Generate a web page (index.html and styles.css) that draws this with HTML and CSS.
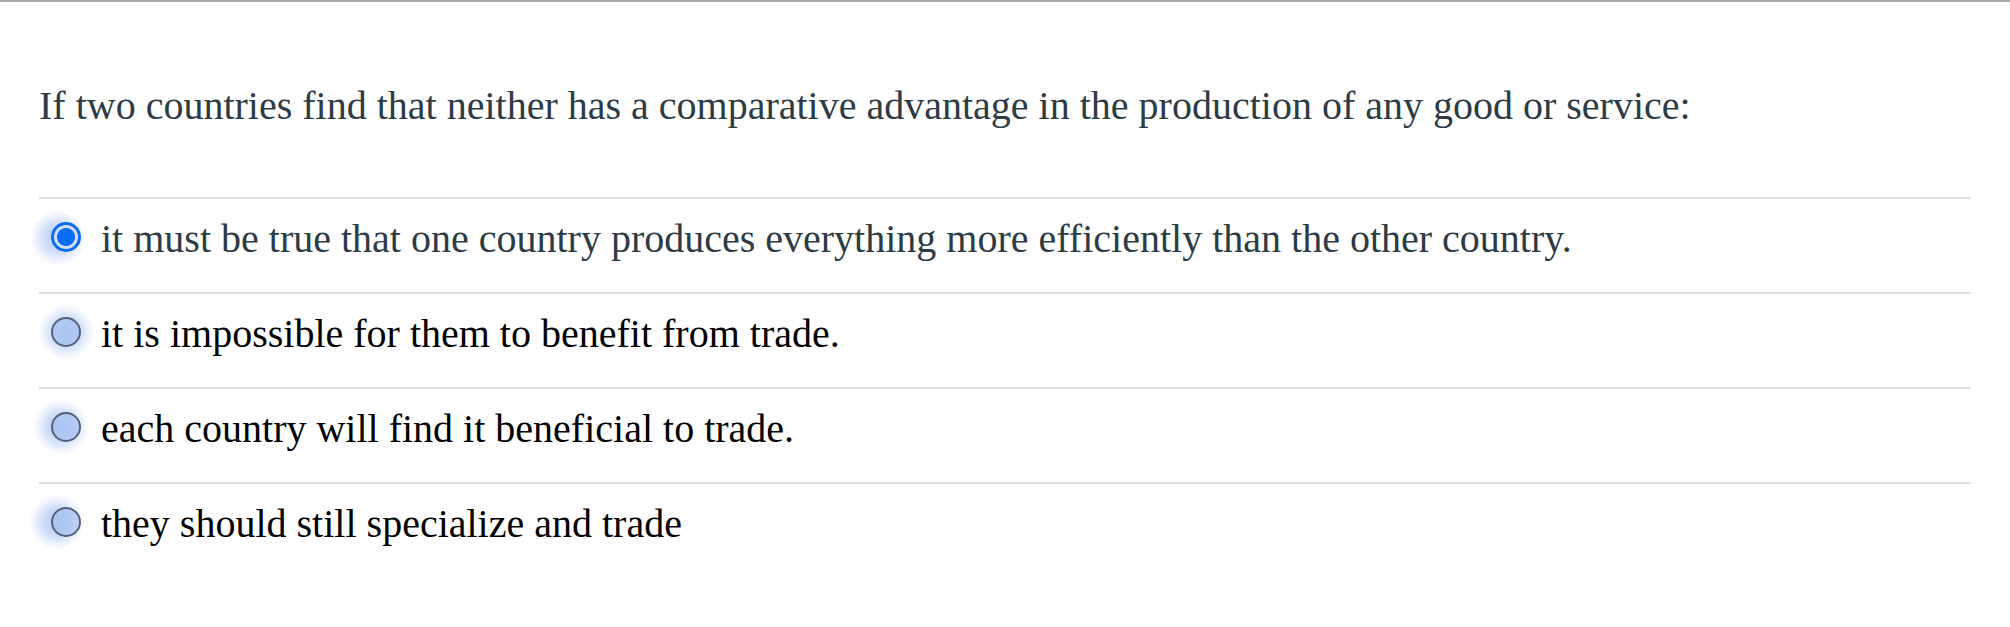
FILE: index.html
```html
<!DOCTYPE html>
<html lang="en">
<head>
<meta charset="utf-8">
<title>Question</title>
<link rel="stylesheet" href="styles.css">
</head>
<body>
<div class="page">
  <p class="question">If two countries find that neither has a comparative advantage in the production of any good or service:</p>
  <ul class="options">
    <li class="option selected">
      <span class="radio checked glow-left"></span>
      <span class="label">it must be true that one country produces everything more efficiently than the other country.</span>
    </li>
    <li class="option">
      <span class="radio"></span>
      <span class="label">it is impossible for them to benefit from trade.</span>
    </li>
    <li class="option">
      <span class="radio glow-mid"></span>
      <span class="label">each country will find it beneficial to trade.</span>
    </li>
    <li class="option">
      <span class="radio glow-left"></span>
      <span class="label">they should still specialize and trade</span>
    </li>
  </ul>
</div>
</body>
</html>
```

FILE: styles.css
```css
html, body {
  margin: 0;
  padding: 0;
}

.page {
  border-top: 2px solid #a9a9a9;
  height: 625px;
  font-family: "Liberation Serif", "Times New Roman", serif;
  font-size: 40px;
  line-height: 48px;
}

.question {
  margin: 80px 0 0 39px;
  color: #2d3b45;
}

.options {
  list-style: none;
  margin: 67px 0 0 39px;
  padding: 0;
  width: 1932px;
}

.option {
  display: flex;
  align-items: center;
  gap: 20px;
  border-top: 2px solid #e0e0e0;
  padding: 16px 0 29px 12px;
  color: #000000;
}

.option.selected {
  color: #2d3b45;
}

.radio {
  position: relative;
  flex: none;
  box-sizing: border-box;
  width: 30px;
  height: 30px;
  border-radius: 50%;
  border: 2.5px solid #55607a;
  background: rgba(160, 188, 240, 0.6);
  margin-top: -4px;
}

.radio::before {
  content: "";
  position: absolute;
  left: -15px;
  top: -15px;
  width: 56px;
  height: 56px;
  border-radius: 50%;
  background: radial-gradient(circle closest-side, rgba(140, 172, 238, 0.6) 0%, rgba(150, 180, 240, 0.5) 45%, rgba(175, 198, 246, 0.28) 75%, rgba(205, 218, 250, 0) 100%);
  z-index: -1;
}

.radio.glow-left::before {
  left: -24px;
}

.radio.glow-mid::before {
  left: -20px;
}

.radio.checked {
  border: 3px solid #0a6cf5;
  background: radial-gradient(circle, #0a6cf5 0, #0a6cf5 8.5px, #d4e0fb 9.5px);
}

.label {
  white-space: nowrap;
}
```
